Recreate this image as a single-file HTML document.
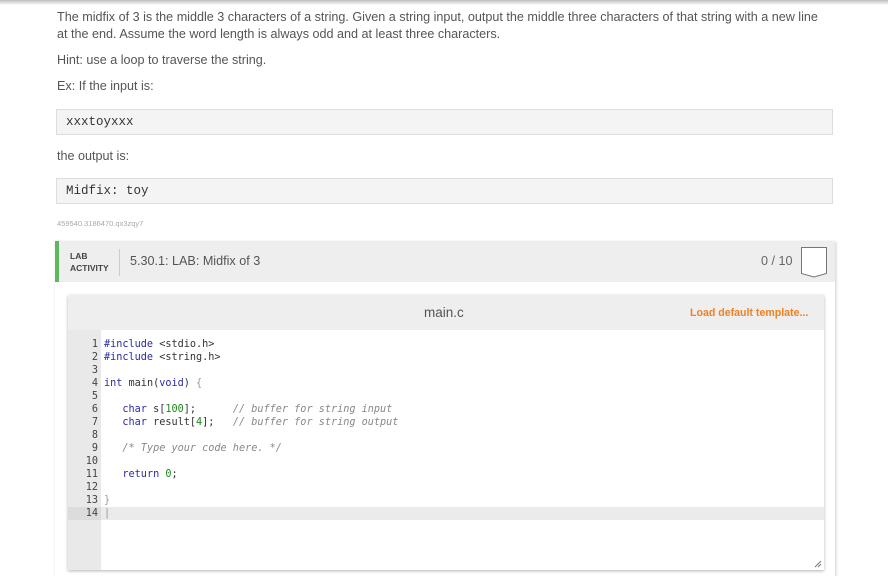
<!DOCTYPE html>
<html><head><style>
body{margin:0;width:888px;height:572px;overflow:hidden;background:#fff;font-family:"Liberation Sans",sans-serif;color:#555;position:relative}
.a{position:absolute}
.t{font-size:12.6px;left:57px;white-space:nowrap;letter-spacing:0px}
.box{position:absolute;left:56px;width:777px;background:#f4f4f4;border:1px solid #ddd;font-family:"Liberation Mono",monospace;font-size:12.5px;color:#333}
.code{font-family:"DejaVu Sans Mono",monospace;font-size:10.2px;line-height:13px;white-space:pre;color:#333}
.k{color:#2a2aa8}.n{color:#1a8a1a}.c{color:#888;font-style:italic}.p{color:#999}
</style></head><body>
<div class="a" style="left:0;top:0;width:888px;height:5px;background:linear-gradient(#bbb,#fff)"></div>
<div class="a t" style="top:10px">The midfix of 3 is the middle 3 characters of a string. Given a string input, output the middle three characters of that string with a new line</div>
<div class="a t" style="top:27px">at the end. Assume the word length is always odd and at least three characters.</div>
<div class="a t" style="top:53px">Hint: use a loop to traverse the string.</div>
<div class="a t" style="top:79px">Ex: If the input is:</div>
<div class="box" style="top:109px;line-height:24px;padding-left:9px;box-sizing:border-box;height:26px">xxxtoyxxx</div>
<div class="a t" style="top:149px">the output is:</div>
<div class="box" style="top:178px;line-height:24px;padding-left:9px;box-sizing:border-box;height:26px">Midfix: toy</div>
<div class="a" style="left:57px;top:219px;font-size:7.5px;color:#aaa">459540.3186470.qx3zqy7</div>

<div class="a" style="left:55px;top:241px;width:780px;height:335px;box-shadow:1px 1px 3px rgba(0,0,0,.2);background:#fff"></div>
<div class="a" style="left:55px;top:241px;width:780px;height:41px;background:#eee"></div>
<div class="a" style="left:55px;top:241px;width:4px;height:41px;background:#5cb85c"></div>
<div class="a" style="left:70px;top:250px;font-size:8.5px;font-weight:bold;line-height:12px;color:#444">LAB<br>ACTIVITY</div>
<div class="a" style="left:119px;top:249px;width:1px;height:27px;background:#ccc"></div>
<div class="a" style="left:130px;top:254px;font-size:12.6px;color:#555">5.30.1: LAB: Midfix of 3</div>
<div class="a" style="left:761px;top:254px;font-size:12.6px;color:#666">0 / 10</div>
<svg class="a" style="left:800px;top:246px" width="28" height="32"><path d="M1.5 1.5H26.5V27.5L14 31L1.5 27.5Z" fill="#fff" stroke="#777" stroke-width="1"/></svg>

<div class="a" style="left:68px;top:295px;width:756px;height:275px;background:#fff;box-shadow:0 1px 3px rgba(0,0,0,.3)"></div>
<div class="a" style="left:68px;top:295px;width:756px;height:35px;background:#eee"></div>
<div class="a" style="left:424px;top:305px;font-size:13.5px;color:#555">main.c</div>
<div class="a" style="left:690px;top:307px;font-size:10.6px;font-weight:bold;color:#f37f20">Load default template...</div>
<div class="a" style="left:68px;top:330px;width:33px;height:240px;background:#e9e9e9"></div>
<div class="a" style="left:101px;top:507px;width:723px;height:13px;background:#ebebeb"></div>
<div class="a" style="left:68px;top:507px;width:33px;height:13px;background:#dcdcdc"></div>
<div class="a code" style="left:68px;top:338px;width:30px;text-align:right;color:#444"> 1
 2
 3
 4
 5
 6
 7
 8
 9
10
11
12
13
14</div>
<div class="a code" style="left:104px;top:338px"><span class="k">#include</span> &lt;stdio.h&gt;
<span class="k">#include</span> &lt;string.h&gt;

<span class="k">int</span> main(<span class="k">void</span>) <span class="p">{</span>

   <span class="k">char</span> s[<span class="n">100</span>];      <span class="c">// buffer for string input</span>
   <span class="k">char</span> result[<span class="n">4</span>];   <span class="c">// buffer for string output</span>

   <span class="c">/* Type your code here. */</span>

   <span class="k">return</span> <span class="n">0</span>;

<span class="p">}</span>
<span class="p">|</span></div>
<svg class="a" style="left:814px;top:560px" width="8" height="8"><path d="M1 7L7 1M4 7L7 4" stroke="#777"/></svg>
</body></html>
